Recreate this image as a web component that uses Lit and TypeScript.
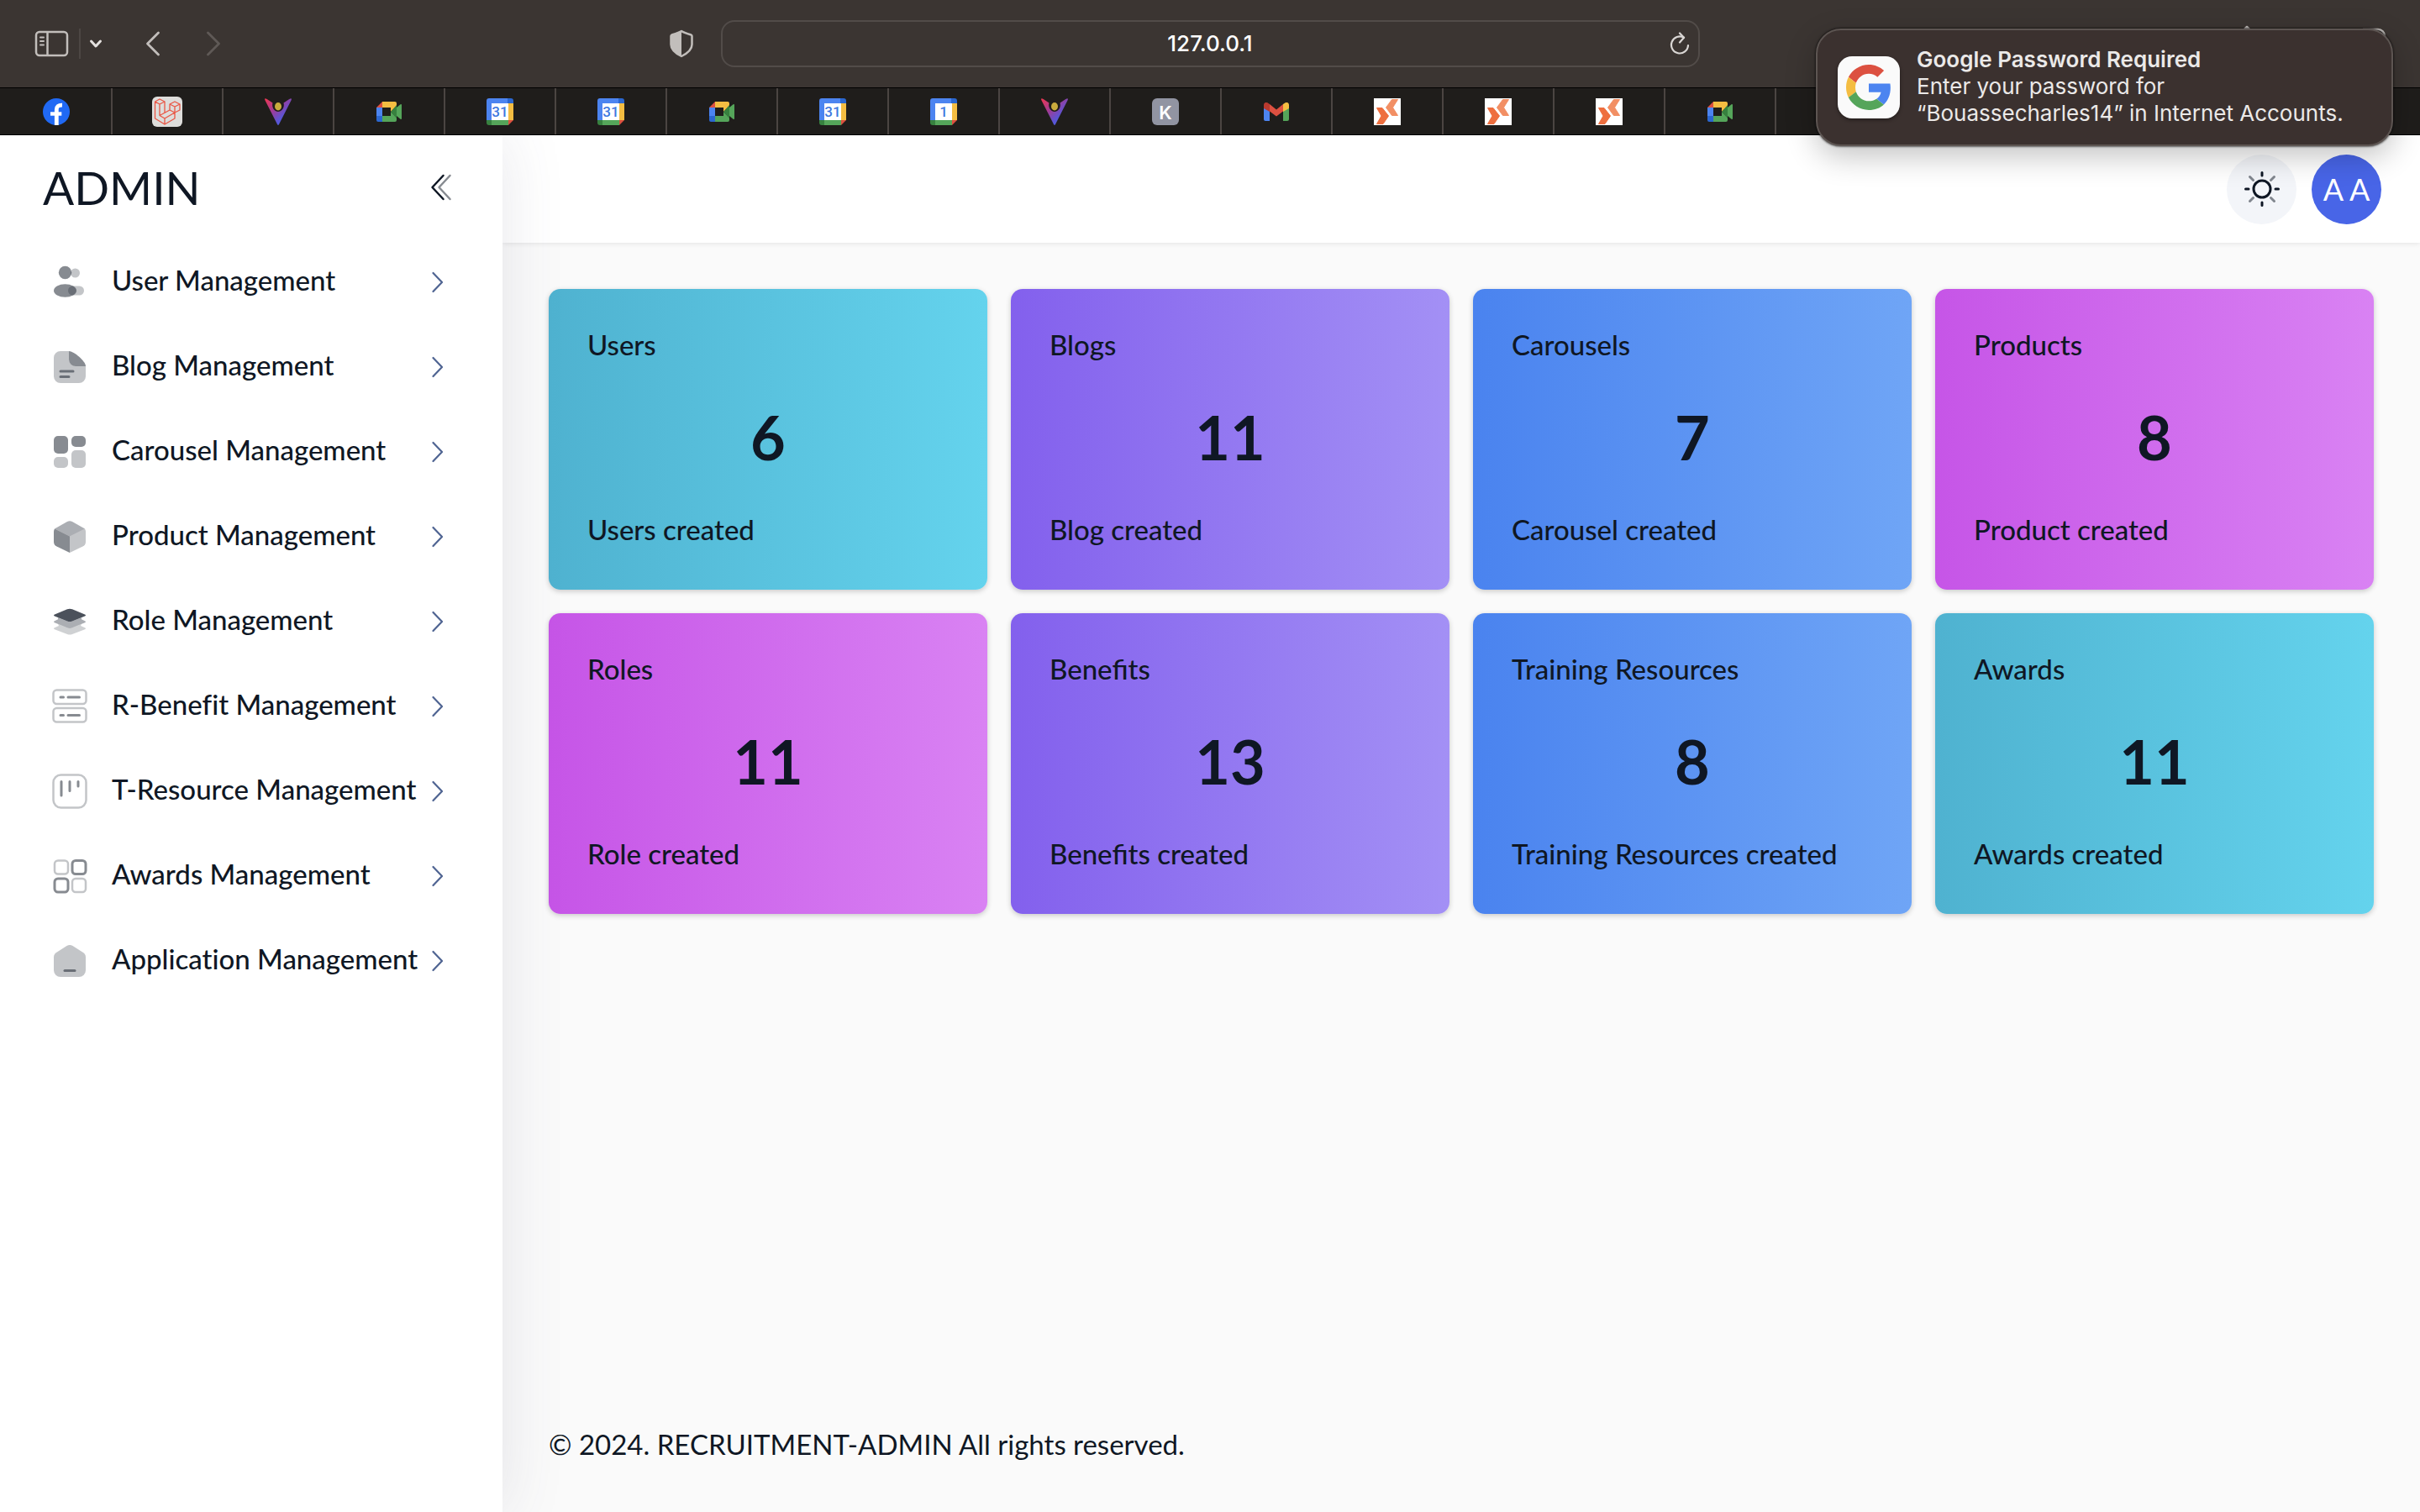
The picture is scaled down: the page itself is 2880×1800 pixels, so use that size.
import { LitElement, html, css, svg, nothing } from "lit";
import type { SVGTemplateResult, TemplateResult } from "lit";
import { customElement, property } from "lit/decorators.js";
import { classMap } from "lit/directives/class-map.js";

/* ---------- Site icons shown in the tab strip ---------- */

const calendar = (day: string) => html`
  <svg viewBox="0 0 32 32" width="32" height="32" aria-hidden="true">
    <path fill="#4c84f0" d="M3 0H25V6H6V26H0V3A3 3 0 0 1 3 0Z" />
    <path fill="#2b67d0" d="M25 0H29A3 3 0 0 1 32 3V6H25Z" />
    <path fill="#f4bd42" d="M26 6H32V26H26Z" />
    <path fill="#55a55a" d="M6 26H26V32H6Z" />
    <path fill="#37813f" d="M0 26H6V32H3A3 3 0 0 1 0 29Z" />
    <path fill="#dc5040" d="M26 26H32L26 32Z" />
    <path fill="#ffffff" d="M6 6H26V26H6Z" />
    <text x="16" y="22" text-anchor="middle" font-family="Roboto, sans-serif" font-size="17" font-weight="500" fill="#3f78e0">${day}</text>
  </svg>
`;

const meet = html`
  <svg viewBox="0 0 30 24" width="30" height="24" aria-hidden="true">
    <path fill="#dc5040" d="M0 7 7 0V7Z" />
    <path fill="#4c84f0" d="M0 7H7V17H0Z" />
    <path fill="#2b67d0" d="M0 17H7V24H2A2 2 0 0 1 0 22Z" />
    <path fill="#f4bd42" d="M7 0H22A2 2 0 0 1 24 2V5L17 12V7H7Z" />
    <path fill="#55a55a" d="M7 17H17V12L24 19V22A2 2 0 0 1 22 24H7Z" />
    <path fill="#37813f" d="M17 12 24 4V20Z" />
    <path fill="#55a55a" d="M24 7 28.500 3.300Q30 2.500 30 4V20Q30 21.500 28.500 20.700L24 17Z" />
  </svg>
`;

const vee = html`
  <svg viewBox="0 0 32 32" width="32" height="32" aria-hidden="true">
    <defs>
      <linearGradient id="vee" x1="0" y1="0" x2="0.900" y2="0.900">
        <stop offset="0" stop-color="#f0364f" />
        <stop offset="0.450" stop-color="#9a3d9c" />
        <stop offset="0.750" stop-color="#5a55d6" />
        <stop offset="1" stop-color="#4a66e8" />
      </linearGradient>
    </defs>
    <path fill="url(#vee)" d="M0.500 0.300Q1.500 0 9.500 5.500C8 11 11.500 16 16 16S24 11 22.500 5.500Q30.500 0 31.500 0.300 32.300 1 31.500 2.500L17 31Q16 32.800 15 31L0.500 2.500Q-0.300 1 0.500 0.300Z" />
    <ellipse cx="16" cy="9.700" rx="4" ry="4.700" fill="#c9ab3d" />
  </svg>
`;

const facebook = html`
  <svg viewBox="0 0 32 32" width="32" height="32" aria-hidden="true">
    <circle cx="16" cy="16" r="16" fill="#2069f4" />
    <path fill="none" stroke="#ffffff" stroke-width="4.800" d="M16.300 32V13.500Q16.300 8 23 8.200" />
    <path fill="none" stroke="#ffffff" stroke-width="4.400" d="M9 18.500H22.300" />
  </svg>
`;

const laravel = html`
  <svg viewBox="0 0 36 36" width="36" height="36" aria-hidden="true">
    <rect width="36" height="36" rx="6" fill="#dedddb" />
    <path
      fill="none"
      stroke="#ea5544"
      stroke-width="1.300"
      stroke-linejoin="round"
      d="M3.500 6 9 3 15 6 9 9ZM3.500 6V26L15 33 27 26V19M9 9V22.500L15 26V33M15 6V19.500M15 26 27 19M9 22.500 21 16M21 9 27 6 33 9 27 12ZM21 9V16L27 19 33 16V9M27 12V19"
    />
  </svg>
`;

const gmail = html`
  <svg viewBox="0 0 30 22" width="30" height="22" aria-hidden="true">
    <path fill="#4c84f0" d="M0 4 7 9V22H2A2 2 0 0 1 0 20Z" />
    <path fill="#55a55a" d="M30 4 23 9V22H28A2 2 0 0 0 30 20Z" />
    <path fill="#b93a2f" d="M0 7V3C0 0 3-1 5.500 1L7 2V11Z" />
    <path fill="#f4bd42" d="M30 7V3C30 0 27-1 24.500 1L23 2V11Z" />
    <path fill="#dc5040" d="M7 2 15 8.500 23 2V10.500L15 16.500 7 10.500Z" />
  </svg>
`;

const arrows = html`
  <svg viewBox="0 0 32 32" width="32" height="32" aria-hidden="true">
    <rect width="32" height="32" fill="#ffffff" />
    <path fill="#ee6f3f" stroke="#ee6f3f" stroke-width="1" stroke-linejoin="round" d="M3.500 11.500H10L17.500 21 11 30.500H3.500L9 21Z" />
    <path fill="#f28f64" stroke="#f28f64" stroke-width="1" stroke-linejoin="round" d="M21.500 1.500H28.500L22.500 11 28.500 20.500H21.500L14.500 11Z" />
  </svg>
`;

const letterK = html`
  <svg viewBox="0 0 32 32" width="32" height="32" aria-hidden="true">
    <rect width="32" height="32" rx="6" fill="#9194a2" />
    <text x="16" y="24.500" text-anchor="middle" font-family="Inter, sans-serif" font-size="22" font-weight="600" fill="#ffffff">K</text>
  </svg>
`;

const tabs: { name: string; icon: TemplateResult }[] = [
  { name: "Facebook", icon: facebook },
  { name: "Laravel", icon: laravel },
  { name: "Vee", icon: vee },
  { name: "Meet", icon: meet },
  { name: "Calendar", icon: calendar("31") },
  { name: "Calendar", icon: calendar("31") },
  { name: "Meet", icon: meet },
  { name: "Calendar", icon: calendar("31") },
  { name: "Calendar", icon: calendar("1") },
  { name: "Vee", icon: vee },
  { name: "K", icon: letterK },
  { name: "Mail", icon: gmail },
  { name: "Arrows", icon: arrows },
  { name: "Arrows", icon: arrows },
  { name: "Arrows", icon: arrows },
  { name: "Meet", icon: meet },
];

/* ---------- Sidebar icons, two-tone on a 46 unit grid ---------- */

const menu: { label: string; icon: SVGTemplateResult }[] = [
  {
    label: "User Management",
    icon: svg`
      <circle class="soft" cx="29.500" cy="12" r="5.500" />
      <rect class="soft" x="21" y="27.500" width="19" height="11" rx="5.500" />
      <circle class="mid" cx="17.500" cy="11.500" r="7.700" />
      <ellipse class="mid" cx="17.500" cy="33" rx="13.500" ry="7.700" />`,
  },
  {
    label: "Blog Management",
    icon: svg`
      <path class="soft" d="M12 4H22V14A8 8 0 0 0 30 22H42V34A8 8 0 0 1 34 42H12A8 8 0 0 1 4 34V12A8 8 0 0 1 12 4Z" />
      <path class="mid" d="M22 4C28 4 42 16 42 22H30A8 8 0 0 1 22 14Z" />
      <path class="line-mid" d="M12 28H27M12 34.500H22" />`,
  },
  {
    label: "Carousel Management",
    icon: svg`
      <rect class="mid" x="4" y="4" width="17" height="21" rx="5" />
      <rect class="mid" x="25" y="4" width="17" height="13" rx="5" />
      <rect class="soft" x="4" y="29" width="17" height="13" rx="5" />
      <rect class="soft" x="25" y="21" width="17" height="21" rx="5" />`,
  },
  {
    label: "Product Management",
    icon: svg`
      <path class="third" d="M5 13.500 20 5Q23 3.500 26 5L41 13.500 23 22.500Z" />
      <path class="mid" d="M5 13.500 23 22.500V42L7.500 34.500Q4 32.500 4 29V17Q4 15 5 13.500Z" />
      <path class="soft" d="M41 13.500 23 22.500V42L38.500 34.500Q42 32.500 42 29V17Q42 15 41 13.500Z" />`,
  },
  {
    label: "Role Management",
    icon: svg`
      <path class="deep" d="M5 14.500 20 8.300Q23 7.200 26 8.300L41 14.500Q43 15.500 41 16.500L26 22.500Q23 23.700 20 22.500L5 16.500Q3 15.500 5 14.500Z" />
      <path class="third" d="M5 22.300 9 20.300 9 18.200 20 22.500Q23 23.700 26 22.500L37 18.200V20.300L41 22.300Q43 23.300 41 24.300L26 30.300Q23 31.500 20 30.300L5 24.300Q3 23.300 5 22.300Z" />
      <path class="faint" d="M5 30.200 10 28 9 26 20 30.300Q23 31.500 26 30.300L37 26 36 28 41 30.200Q43 31.200 41 32.200L26 38Q23 39.200 20 38L5 32.200Q3 31.200 5 30.200Z" />`,
  },
  {
    label: "R-Benefit Management",
    icon: svg`
      <rect class="line-soft" x="3.500" y="3.500" width="39" height="16.500" rx="4" />
      <rect class="line-soft" x="3.500" y="25" width="39" height="16.500" rx="4" />
      <path class="line-mid" d="M12 12H15.500M21 12H34.500M12 33.500H15.500M21 33.500H34.500" />`,
  },
  {
    label: "T-Resource Management",
    icon: svg`
      <rect class="line-soft" x="3.500" y="3.500" width="39" height="39" rx="9" />
      <path class="line-mid" d="M13 11.500V28M23 11.500V22.500M33 11.500V17" />`,
  },
  {
    label: "Awards Management",
    icon: svg`
      <rect class="line-soft" x="5" y="4.500" width="16" height="16" rx="4" />
      <rect class="line-mid" x="26" y="4.500" width="16" height="16" rx="4" />
      <rect class="line-mid" x="5" y="26" width="16" height="16" rx="4" />
      <rect class="line-soft" x="26" y="26" width="16" height="16" rx="4" />`,
  },
  {
    label: "Application Management",
    icon: svg`
      <path class="soft" d="M7 13 19.500 5Q23 3 26.500 5L39 13Q42 15 42 18.500V34A8 8 0 0 1 34 42H12A8 8 0 0 1 4 34V18.500Q4 15 7 13Z" />
      <path class="line-mid" d="M17 34.500H29" />`,
  },
];

type Tone = "cyan" | "violet" | "blue" | "fuchsia";

const stats: { title: string; count: number; note: string; tone: Tone }[] = [
  { title: "Users", count: 6, note: "Users created", tone: "cyan" },
  { title: "Blogs", count: 11, note: "Blog created", tone: "violet" },
  { title: "Carousels", count: 7, note: "Carousel created", tone: "blue" },
  { title: "Products", count: 8, note: "Product created", tone: "fuchsia" },
  { title: "Roles", count: 11, note: "Role created", tone: "fuchsia" },
  { title: "Benefits", count: 13, note: "Benefits created", tone: "violet" },
  { title: "Training Resources", count: 8, note: "Training Resources created", tone: "blue" },
  { title: "Awards", count: 11, note: "Awards created", tone: "cyan" },
];

const controls = css`
  * {
    box-sizing: border-box;
  }
  button {
    display: flex;
    align-items: center;
    justify-content: center;
    margin: 0;
    padding: 0;
    border: 0;
    background: none;
    color: inherit;
    font: inherit;
    cursor: pointer;
  }
  svg {
    display: block;
    flex: none;
  }
`;

@customElement("browser-chrome")
class BrowserChrome extends LitElement {
  static styles = [
    controls,
    css`
      :host {
        display: block;
        font-family: Inter, "Liberation Sans", sans-serif;
        color: #c2bebb;
      }
      .toolbar {
        display: grid;
        grid-template-columns: 1fr 1165px 1fr;
        align-items: center;
        height: 104px;
        background: #3b3532;
      }
      .left {
        display: flex;
        align-items: center;
        padding: 0 32px 0 40px;
      }
      .divider {
        width: 2px;
        height: 36px;
        margin-left: 12px;
        background: #4d4744;
      }
      .menu-toggle {
        width: 36px;
        height: 40px;
        color: #e4e1df;
      }
      .step {
        width: 72px;
        height: 40px;
      }
      .back {
        margin-left: 14px;
      }
      .step:disabled {
        color: #5f5956;
      }
      .shield {
        margin-left: auto;
      }
      .address {
        display: flex;
        align-items: center;
        height: 56px;
        padding: 0 8px 0 36px;
        border: 2px solid #524c49;
        border-radius: 16px;
      }
      .url {
        flex: 1;
        min-width: 0;
        padding: 0;
        border: 0;
        outline: 0;
        background: none;
        color: #ffffff;
        font: 500 26px/32px Inter, "Liberation Sans", sans-serif;
        text-align: center;
      }
      .reload {
        width: 28px;
        height: 40px;
        color: #dad7d5;
      }
      .right {
        display: flex;
        justify-content: flex-end;
        gap: 114px;
        padding-right: 40px;
      }
      .tabs {
        display: flex;
        height: 57px;
        padding-left: 2px;
        border-top: 1px solid #000000;
        border-bottom: 1px solid #000000;
        background: #1f1d1b;
      }
      .tab {
        display: flex;
        flex: none;
        align-items: center;
        justify-content: center;
        width: 132px;
        border-right: 2px solid #4b4542;
      }
    `,
  ];

  render() {
    return html`
      <div class="toolbar">
        <div class="left">
          <button aria-label="Show sidebar">
            <svg viewBox="0 0 42 32" width="42" height="32" fill="none" stroke="currentColor" stroke-width="2.500">
              <rect x="3" y="2" width="37" height="28" rx="4" />
              <path d="M16.500 2V30" />
              <path stroke-width="2" stroke-linecap="round" d="M8 8.500H12M8 13H12M8 17.500H12" />
            </svg>
          </button>
          <span class="divider"></span>
          <button class="menu-toggle" aria-label="Tab groups">
            <svg viewBox="0 0 16 12" width="16" height="12" fill="none" stroke="currentColor" stroke-width="3" stroke-linecap="round" stroke-linejoin="round">
              <path d="M2.500 3 8 9 13.500 3" />
            </svg>
          </button>
          <button class="step back" aria-label="Back">
            <svg viewBox="0 0 18 30" width="18" height="30" fill="none" stroke="currentColor" stroke-width="2.800" stroke-linecap="round" stroke-linejoin="round">
              <path d="M15.500 2 2.500 15 15.500 28" />
            </svg>
          </button>
          <button class="step" aria-label="Forward" disabled>
            <svg viewBox="0 0 18 30" width="18" height="30" fill="none" stroke="currentColor" stroke-width="2.800" stroke-linecap="round" stroke-linejoin="round">
              <path d="M2.500 2 15.500 15 2.500 28" />
            </svg>
          </button>
          <button class="shield" aria-label="Privacy report">
            <svg viewBox="0 0 30 34" width="30" height="34">
              <path fill="none" stroke="currentColor" stroke-width="2.500" stroke-linejoin="round" d="M15 2Q17 3.500 26.500 6.500 27.500 7 27.500 8V18C27.500 24 22 28.500 15 32 8 28.500 2.500 24 2.500 18V8Q2.500 7 3.500 6.500 13 3.500 15 2Z" />
              <path fill="currentColor" d="M15 2V32C8 28.500 2.500 24 2.500 18V8Q2.500 7 3.500 6.500 13 3.500 15 2Z" />
            </svg>
          </button>
        </div>
        <div class="address">
          <input class="url" type="text" aria-label="Address" .value=${"127.0.0.1"} />
          <button class="reload" aria-label="Reload">
            <svg viewBox="0 0 24 28" width="24" height="28" fill="none" stroke="currentColor" stroke-width="2.200" stroke-linecap="round" stroke-linejoin="round">
              <path d="M22 16A10 10 0 1 1 17 6.800" />
              <path d="M12 1.500 17 6.800 12 12.500" />
            </svg>
          </button>
        </div>
        <div class="right">
          <button aria-label="Share">
            <svg viewBox="0 0 28 44" width="28" height="44" fill="none" stroke="currentColor" stroke-width="2.500" stroke-linecap="round" stroke-linejoin="round">
              <path d="M14 26V2M8 8 14 2 20 8M8 14H3V34H25V14H20" />
            </svg>
          </button>
          <button aria-label="Tab overview">
            <svg viewBox="0 0 38 38" width="38" height="38" fill="none" stroke="currentColor" stroke-width="2.500" stroke-linejoin="round">
              <path d="M10 2H28A8 8 0 0 1 36 10V28M2 10H28V36H2Z" />
            </svg>
          </button>
        </div>
      </div>
      <nav class="tabs" aria-label="Tabs">
        ${tabs.map((tab) => html`<a class="tab" href="#" aria-label=${tab.name}>${tab.icon}</a>`)}
      </nav>
    `;
  }
}

@customElement("system-notice")
class SystemNotice extends LitElement {
  static styles = [
    controls,
    css`
      :host {
        display: flex;
        align-items: center;
        gap: 20px;
        box-sizing: border-box;
        width: 687px;
        height: 140px;
        padding: 0 24px;
        border: 2px solid #5d5552;
        border-radius: 30px;
        background: #3b312f;
        box-shadow:
          0 0 2px 1px rgba(0, 0, 0, 0.5),
          0 12px 36px rgba(0, 0, 0, 0.24);
        color: #ebe9e8;
        font: 400 26px/32px Inter, "Liberation Sans", sans-serif;
      }
      .badge {
        display: flex;
        flex: none;
        align-items: center;
        justify-content: center;
        width: 74px;
        height: 74px;
        border-radius: 17px;
        background: #fafafa;
        box-shadow: 0 2px 4px rgba(0, 0, 0, 0.4);
      }
      .title,
      .body {
        margin: 0;
      }
      .title {
        font-weight: 600;
      }
      .copy {
        padding-bottom: 2px;
        white-space: nowrap;
      }
    `,
  ];

  render() {
    return html`
      <div class="badge">
        <svg viewBox="0 0 48 48" width="54" height="54" aria-hidden="true">
          <path fill="#dc5040" d="M24 9.500c3.540 0 6.710 1.220 9.210 3.600l6.850-6.850C35.900 2.380 30.470 0 24 0 14.620 0 6.510 5.380 2.560 13.220l7.980 6.190C12.430 13.720 17.740 9.500 24 9.500z" />
          <path fill="#4c84f0" d="M46.980 24.550c0-1.570-.15-3.090-.38-4.550H24v9.020h12.940c-.58 2.960-2.260 5.480-4.780 7.180l7.730 6c4.510-4.180 7.090-10.360 7.090-17.650z" />
          <path fill="#f4bd42" d="M10.530 28.590c-.48-1.450-.76-2.990-.76-4.590s.27-3.140.76-4.590l-7.980-6.190C.92 16.460 0 20.120 0 24c0 3.880.92 7.540 2.560 10.780l7.970-6.190z" />
          <path fill="#55a55a" d="M24 48c6.480 0 11.930-2.130 15.890-5.810l-7.730-6c-2.150 1.450-4.920 2.300-8.160 2.300-6.260 0-11.570-4.220-13.470-9.910l-7.980 6.190C6.510 42.620 14.620 48 24 48z" />
        </svg>
      </div>
      <div class="copy">
        <p class="title">Google Password Required</p>
        <p class="body">Enter your password for<br />“Bouassecharles14” in Internet Accounts.</p>
      </div>
    `;
  }
}

@customElement("side-menu")
class SideMenu extends LitElement {
  static styles = [
    controls,
    css`
      :host {
        display: block;
        background: #ffffff;
        box-shadow: 0 0 70px rgba(75, 80, 110, 0.13);
        color: #0f1724;
      }
      .head {
        display: flex;
        align-items: center;
        justify-content: space-between;
        height: 124px;
        padding: 0 60px 0 51px;
      }
      .brand {
        margin: 0;
        font-size: 55px;
        font-weight: 400;
        line-height: 64px;
      }
      .list {
        margin: 0;
        padding: 0;
        list-style: none;
      }
      .item {
        width: 100%;
        height: 101px;
        padding: 0 70px 0 60px;
        font-weight: 500;
        font-size: 33px;
        line-height: 48px;
        white-space: nowrap;
      }
      .label {
        flex: 1;
        padding: 0 0 6px 27px;
        text-align: left;
        font-variant-ligatures: none;
      }
      .chevron {
        color: #4f6492;
      }
      .soft {
        fill: #0f1724;
        fill-opacity: 0.25;
      }
      .faint {
        fill: #0f1724;
        fill-opacity: 0.2;
      }
      .third {
        fill: #0f1724;
        fill-opacity: 0.35;
      }
      .mid {
        fill: #0f1724;
        fill-opacity: 0.5;
      }
      .deep {
        fill: #0f1724;
        fill-opacity: 0.75;
      }
      .line-soft,
      .line-mid {
        fill: none;
        stroke: #0f1724;
        stroke-width: 2.5;
        stroke-linecap: round;
        stroke-opacity: 0.25;
      }
      .line-mid {
        stroke-width: 3;
        stroke-opacity: 0.5;
      }
    `,
  ];

  render() {
    return html`
      <div class="head">
        <h1 class="brand">ADMIN</h1>
        <button aria-label="Collapse menu">
          <svg viewBox="0 0 26 32" width="26" height="32" fill="none" stroke="currentColor" stroke-width="2.500" stroke-linecap="round" stroke-linejoin="round">
            <path d="M15.500 2 2.500 16 15.500 30" />
            <path stroke-opacity="0.5" d="M23.500 2 10.500 16 23.500 30" />
          </svg>
        </button>
      </div>
      <nav aria-label="Main">
        <ul class="list">
          ${menu.map(
            (entry) => html`
              <li>
                <button class="item">
                  <svg viewBox="0 0 46 46" width="46" height="46" aria-hidden="true">${entry.icon}</svg>
                  <span class="label">${entry.label}</span>
                  <svg class="chevron" viewBox="0 0 14 26" width="14" height="26" fill="none" stroke="currentColor" stroke-width="2.200" stroke-linecap="round" stroke-linejoin="round" aria-hidden="true">
                    <path d="M1.500 2 12 13 1.500 24" />
                  </svg>
                </button>
              </li>
            `,
          )}
        </ul>
      </nav>
    `;
  }
}

@customElement("stat-card")
class StatCard extends LitElement {
  @property() heading = "";
  @property() note = "";
  @property() tone: Tone = "cyan";
  @property({ type: Number }) count = 0;

  static styles = css`
    .card {
      display: flex;
      flex-direction: column;
      justify-content: space-between;
      box-sizing: border-box;
      height: 358px;
      padding: 42px 46px 48px;
      border-radius: 14px;
      box-shadow: 0 2px 6px rgba(0, 0, 0, 0.2);
      color: #0f1724;
      font-size: 33px;
      font-weight: 500;
      line-height: 48px;
    }
    .cyan {
      background: linear-gradient(to right, #4fb2d0, #64d3ed);
    }
    .violet {
      background: linear-gradient(to right, #8360ed, #a390f5);
    }
    .blue {
      background: linear-gradient(to right, #4a83ef, #6fa5f6);
    }
    .fuchsia {
      background: linear-gradient(to right, #c655e7, #d982f3);
    }
    .heading,
    .count,
    .note {
      margin: 0;
      font-size: inherit;
      font-weight: inherit;
    }
    .count {
      font-size: 72px;
      font-weight: 700;
      line-height: 72px;
      text-align: center;
    }
  `;

  render() {
    return html`
      <article class=${classMap({ card: true, [this.tone]: true })}>
        <h2 class="heading">${this.heading}</h2>
        <p class="count">${this.count}</p>
        <p class="note">${this.note || nothing}</p>
      </article>
    `;
  }
}

@customElement("app-root")
class AppRoot extends LitElement {
  static styles = [
    controls,
    css`
      :host {
        position: relative;
        display: flex;
        flex-direction: column;
        min-height: 100vh;
        background: #fafafa;
        color: #0f1724;
        font-family: Lato, "Open Sans", sans-serif;
      }
      .page {
        display: flex;
        flex: 1;
        overflow: hidden;
      }
      .side {
        position: relative;
        z-index: 1;
        flex: none;
        width: 598px;
      }
      .content {
        display: flex;
        flex: 1;
        flex-direction: column;
        min-width: 0;
      }
      .topbar {
        display: flex;
        align-items: center;
        justify-content: flex-end;
        gap: 18px;
        height: 128px;
        padding: 0 46px;
        background: #ffffff;
        box-shadow: 0 1px 6px rgba(0, 0, 0, 0.09);
      }
      .round {
        width: 83px;
        height: 83px;
        border-radius: 50%;
        background: #f3f5f9;
      }
      .avatar {
        background: #4865e7;
        color: #ffffff;
        font-size: 36px;
        line-height: 48px;
        white-space: pre;
      }
      .main {
        display: grid;
        flex: 1;
        grid-template-columns: repeat(4, minmax(0, 1fr));
        align-content: start;
        gap: 28px;
        padding: 55px;
      }
      .footer {
        padding: 0 55px 57px;
        font-size: 33px;
        line-height: 48px;
      }
      .legal {
        margin: 0;
      }
      .notice {
        position: absolute;
        top: 34px;
        right: 32px;
        z-index: 2;
      }
    `,
  ];

  render() {
    return html`
      <browser-chrome></browser-chrome>
      <div class="page">
        <side-menu class="side"></side-menu>
        <div class="content">
          <header class="topbar">
            <button class="round" aria-label="Light theme">
              <svg viewBox="0 0 44 44" width="44" height="44" fill="none" stroke="#0f1724" stroke-width="3" stroke-linecap="round">
                <circle cx="22" cy="22" r="10" />
                <path d="M22 2.500V6M22 38V41.500M2.500 22H6M38 22H41.500" />
                <path stroke-opacity="0.5" d="M7.500 7.500 11.500 11.500M36.500 7.500 32.500 11.500M7.500 36.500 11.500 32.500M36.500 36.500 32.500 32.500" />
              </svg>
            </button>
            <button class="round avatar">A A</button>
          </header>
          <main class="main">
            ${stats.map(
              (stat) => html`<stat-card .heading=${stat.title} .count=${stat.count} .note=${stat.note} .tone=${stat.tone}></stat-card>`,
            )}
          </main>
          <footer class="footer">
            <p class="legal">© 2024. RECRUITMENT-ADMIN All rights reserved.</p>
          </footer>
        </div>
      </div>
      <system-notice class="notice" role="alert"></system-notice>
    `;
  }
}
